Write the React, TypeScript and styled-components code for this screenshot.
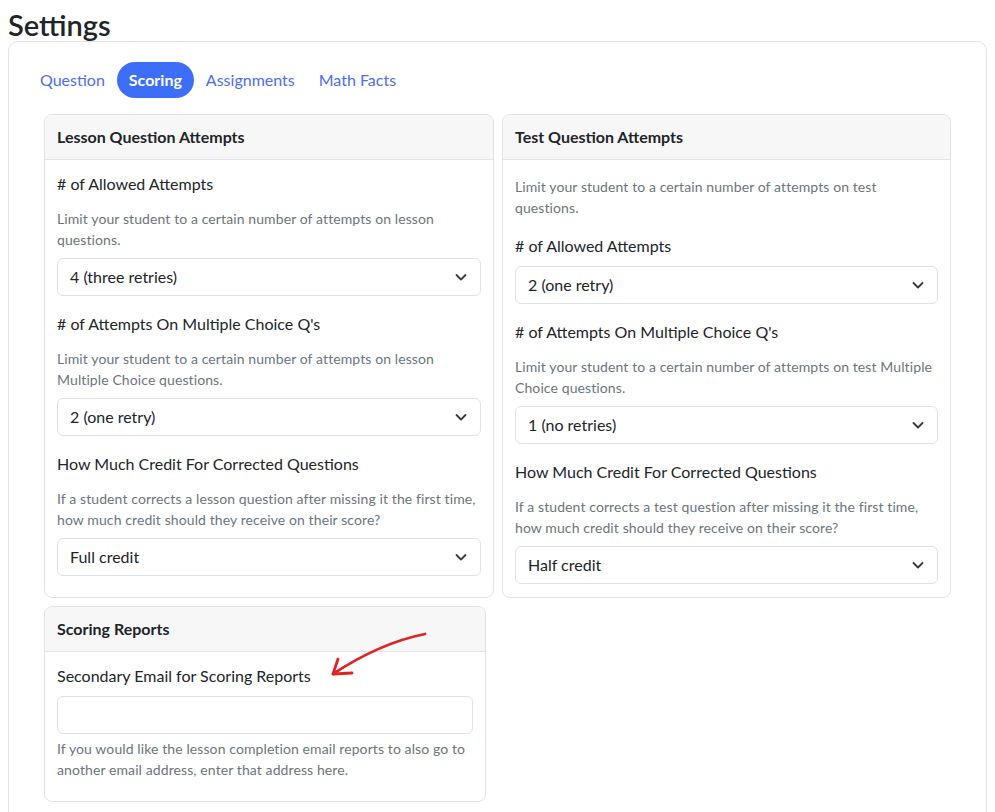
import React from 'react';
import styled, { createGlobalStyle } from 'styled-components';

interface SelectProps {
    value: string;
    mb?: number;
}

const GlobalStyle = createGlobalStyle`
    body {
        margin: 8px;
        font-family: Lato, "Noto Sans", sans-serif;
        color: #212529;
        background: #fff;
    }
    * { box-sizing: border-box; }
`;

const text = `#212529`;
const grey = `#6c757d`;
const line = `#e1e3e6`;
const blue = `#3d6ef7`;
const linkBlue = `#4e6cf6`;

const tabs = ['Question', 'Scoring', 'Assignments', 'Math Facts'];

const App = () => {
    return (
        <>
            <GlobalStyle />
            <PageTitle>Settings</PageTitle>
            <OuterCard>
                <TabBar>
                    {tabs.map(t => (
                        <Tab key={t} $active={t === 'Scoring'}>{t}</Tab>
                    ))}
                </TabBar>
                <Content>
                    <PanelGrid>
                        <Panel>
                            <PanelHeader>Lesson Question Attempts</PanelHeader>
                            <PanelBody>
                                <FieldLabel $mb={12}># of Allowed Attempts</FieldLabel>
                                <Hint $mb={8}>Limit your student to a certain number of attempts on lesson questions.</Hint>
                                <Select value="4 (three retries)" mb={16} />

                                <FieldLabel $mb={12}># of Attempts On Multiple Choice Q's</FieldLabel>
                                <Hint $mb={8}>Limit your student to a certain number of attempts on lesson Multiple Choice questions.</Hint>
                                <Select value="2 (one retry)" mb={16} />

                                <FieldLabel $mb={12}>How Much Credit For Corrected Questions</FieldLabel>
                                <Hint $mb={8}>If a student corrects a lesson question after missing it the first time, how much credit should they receive on their score?</Hint>
                                <Select value="Full credit" />
                            </PanelBody>
                        </Panel>
                        <Panel>
                            <PanelHeader>Test Question Attempts</PanelHeader>
                            <PanelBody>
                                <IntroHint>Limit your student to a certain number of attempts on test questions.</IntroHint>
                                <FieldLabel $mb={8}># of Allowed Attempts</FieldLabel>
                                <Select value="2 (one retry)" mb={16} />

                                <FieldLabel $mb={12}># of Attempts On Multiple Choice Q's</FieldLabel>
                                <Hint $mb={8}>Limit your student to a certain number of attempts on test Multiple Choice questions.</Hint>
                                <Select value="1 (no retries)" mb={16} />

                                <FieldLabel $mb={12}>How Much Credit For Corrected Questions</FieldLabel>
                                <Hint $mb={8}>If a student corrects a test question after missing it the first time, how much credit should they receive on their score?</Hint>
                                <Select value="Half credit" />
                            </PanelBody>
                        </Panel>
                    </PanelGrid>
                    <ReportsPanel>
                        <PanelHeader>Scoring Reports</PanelHeader>
                        <PanelBody>
                            <FieldLabel $mb={8}>Secondary Email for Scoring Reports</FieldLabel>
                            <TextInput type="email" />
                            <Hint $mb={8} $mt={4}>If you would like the lesson completion email reports to also go to another email address, enter that address here.</Hint>
                        </PanelBody>
                        {/* hand-drawn pointer at the email field */}
                        <Arrow viewBox="0 0 160 60" width="160" height="60">
                            <path d="M140 7 Q95 16 48 47" />
                            <path d="M53 32 L48 47 L67 46" />
                        </Arrow>
                    </ReportsPanel>
                </Content>
            </OuterCard>
        </>
    );
};

export default App;

const PageTitle = styled.h2`
    margin: 0;
    font-size: 29px;
    font-weight: 600;
    line-height: 33px;
    color: ${text};
`;
const OuterCard = styled.section`
    border: 1px solid ${line};
    border-radius: 10px;
    padding: 20px 20px 40px;
`;
const TabBar = styled.nav`
    display: flex;
    margin-bottom: 16px;
    margin-left: -1px;
`;
const Tab = styled.button<{ $active?: boolean }>`
    font: inherit;
    font-size: 16px;
    line-height: 24px;
    padding: 6px 12px;
    border: 0;
    border-radius: 18px;
    cursor: pointer;
    background: ${p => p.$active ? blue : 'transparent'};
    color: ${p => p.$active ? '#fff' : linkBlue};
    font-weight: ${p => p.$active ? 700 : 400};
`;
const Content = styled.div`
    padding: 0 16px;
    margin-left: -1px;
`;
const PanelGrid = styled.div`
    display: grid;
    grid-template-columns: 450px 449px;
    gap: 8px;
`;
const Panel = styled.div`
    border: 1px solid ${line};
    border-radius: 8px;
    overflow: hidden;
    background: #fff;
`;
const ReportsPanel = styled(Panel)`
    width: 442px;
    margin-top: 8px;
    position: relative;
    overflow: visible;
`;
const PanelHeader = styled.header`
    background: #f7f7f7;
    border-bottom: 1px solid ${line};
    border-radius: 8px 8px 0 0;
    padding: 10px 12px;
    font-size: 16px;
    line-height: 24px;
    font-weight: 700;
    color: ${text};
`;
const PanelBody = styled.div`
    padding: 12px 12px 13px;
`;
const FieldLabel = styled.div<{ $mb?: number }>`
    font-size: 16px;
    line-height: 24px;
    color: ${text};
    margin-bottom: ${p => p.$mb ?? 0}px;
`;
const Hint = styled.p<{ $mb?: number; $mt?: number }>`
    margin: ${p => p.$mt ?? 0}px 0 ${p => p.$mb ?? 0}px;
    font-size: 14px;
    line-height: 21px;
    letter-spacing: 0.1px;
    color: ${grey};
`;
const IntroHint = styled(Hint)`
    margin: 4px 0 16px;
    max-width: 380px;
`;
const SelectWrap = styled.div<{ $mb: number }>`
    position: relative;
    margin-bottom: ${p => p.$mb}px;
`;
const SelectBox = styled.div`
    height: 38px;
    border: 1px solid #dee2e6;
    border-radius: 6px;
    padding: 6px 36px 6px 12px;
    font-size: 16px;
    line-height: 24px;
    color: ${text};
    background: #fff;
`;
const Chevron = styled.svg`
    position: absolute;
    right: 14px;
    top: 13px;
    fill: none;
    stroke: #343a40;
    stroke-width: 1.8;
    stroke-linecap: round;
    stroke-linejoin: round;
`;
const TextInput = styled.input`
    display: block;
    width: 100%;
    height: 38px;
    border: 1px solid #dee2e6;
    border-radius: 6px;
    padding: 6px 12px;
    font: inherit;
    font-size: 16px;
`;
const Arrow = styled.svg`
    position: absolute;
    left: 240px;
    top: 20px;
    fill: none;
    stroke: #e02424;
    stroke-width: 2.8;
    stroke-linecap: round;
    stroke-linejoin: round;
`;

const Select = ({ value, mb = 0 }: SelectProps) => (
    <SelectWrap $mb={mb}>
        <SelectBox>{value}</SelectBox>
        <Chevron width="12" height="12" viewBox="0 0 12 12">
            <path d="M1.5 4 L6 8.5 L10.5 4" />
        </Chevron>
    </SelectWrap>
);
